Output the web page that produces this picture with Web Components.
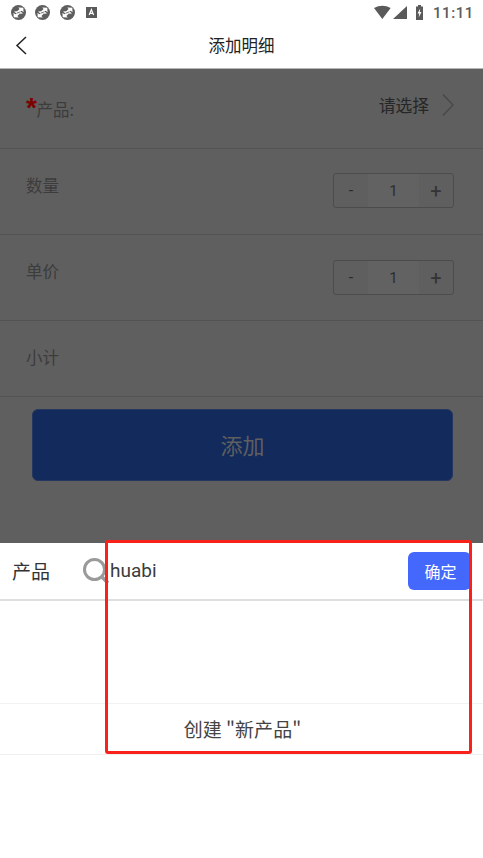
<!DOCTYPE html>
<html lang="zh"><head><meta charset="utf-8"><style>
html,body{margin:0;padding:0;background:#fff}
body{width:483px;height:858px;overflow:hidden;font-family:"Noto Sans CJK SC","Noto Sans",sans-serif;position:relative}
</style></head><body>
<app-page></app-page>
<script>
function def(name,html,setup){customElements.define(name,class extends HTMLElement{constructor(){super();this.attachShadow({mode:'open'}).innerHTML=html;if(setup)setup(this)}})}
const sync='<circle cx="7.500" cy="7.500" r="7.500" fill="#5e5e5e"/><path fill="#fff" d="M3 6.600 6.300 6.200 8.600 3.900 7.200 2.500 12.300 2.700 12.500 7.300 10.800 5.800 7.700 7 5.500 8.500zM12 8.400 8.700 8.800 6.400 11.100 7.800 12.500 2.700 12.300 2.500 7.700 4.200 9.200 7.300 8 9.500 6.500z"/><path fill="#5e5e5e" d="M5.600 7.400 9.400 7.600 9 8.200 6 7.900z" opacity=".8"/>';
def('status-bar',`<style>:host{display:flex;align-items:center;height:24px;padding:0 9px 0 11px;background:#fff;color:#5c5c5c}
.l{display:flex;gap:9.300px;align-items:center}svg{display:block}.sp{flex:1}.t{font:500 15px/24px Roboto,sans-serif;letter-spacing:.6px;margin-left:10px;margin-top:1px}
.r{display:flex;align-items:center}</style>
<div class="l"><svg width="15" height="15" viewBox="0 0 15 15">${sync}</svg><svg width="15" height="15" viewBox="0 0 15 15">${sync}</svg><svg width="15" height="15" viewBox="0 0 15 15">${sync}</svg>
<svg width="11" height="11" viewBox="0 0 11 11" style="margin-left:2px"><rect width="11" height="11" fill="#5a5a5a"/><path fill="none" stroke="#fff" stroke-width="1.200" d="M3.200 8 5.400 2.500 7.600 8M4 6.300H6.800"/></svg></div>
<div class="sp"></div><div class="r">
<svg width="33" height="15" viewBox="0 0 33 15"><path fill="#5a5a5a" d="M0 3Q8.300-1.500 16.700 3L8.300 14zM19 14 33 1V14z"/></svg>
<svg width="7" height="15" viewBox="0 0 7 15" style="margin-left:9px"><path fill="#5a5a5a" d="M2 0H5V1.500H7V15H0V1.500H2z"/><path fill="#fff" d="M4.200 3.500 1.500 8.500H3.200L2.700 12.500 5.500 7H3.800z"/></svg>
<span class="t">11:11</span></div>`);
def('nav-bar',`<style>:host{display:flex;align-items:center;justify-content:center;height:44px;background:#fff;position:relative;border-bottom:1px solid #b5b5b5;color:#222;font-size:16.500px}
svg{position:absolute;left:15px;top:12px}span{margin-top:-2px}</style>
<svg width="13" height="19" viewBox="0 0 13 19"><path fill="none" stroke="#222" stroke-width="1.500" d="M11 1 2 9.500 11 18"/></svg><span><slot></slot></span>`);
def('form-row',`<style>:host{display:flex;box-sizing:border-box;align-items:center;padding:0 29px 0 26px;border-bottom:1px solid #535353;color:#3c3c3c;font-size:16.500px;justify-content:space-between}</style><slot></slot>`);
def('num-stepper',`<style>:host{display:flex;box-sizing:border-box;width:121px;height:35px;border:1px solid #4c4c4c;border-radius:3px;color:#2a2a2a;font:16px/34px Roboto,sans-serif;text-align:center}
div{box-sizing:border-box}.a{width:34px}.m{width:51px;background:#626262;color:#2c2c2c;font-size:15px}.b{width:34px;font-size:20px;color:#333}</style>
<div class="a">-</div><div class="m">1</div><div class="b">+</div>`);
def('add-button',`<style>:host{display:flex;align-items:center;justify-content:center;box-sizing:border-box;height:72px;margin:12px 30px 0 32px;padding-bottom:2px;background:#132a5d;border:1px solid #25375f;border-radius:6px;color:#5f5f5f;font-size:22px}</style><slot></slot>`);
def('dim-form',`<style>:host{display:block;height:474px;background:#5f5f5f;box-sizing:border-box}
.s{color:#7c0000;font:700 28px/1 "Liberation Sans",sans-serif;width:10.500px}
.lb{display:flex;align-items:flex-start;margin-top:-2px}.lb span:last-child{margin-top:3px;color:#3c3c3c}
.rt{display:flex;align-items:center;color:#262626;font-size:16.800px;gap:13px;margin-top:-7px}
.top{align-self:flex-start;margin-top:24px}
.st1{margin-top:-2px}
</style>
<form-row style="height:80px"><div class="lb"><span class="s">*</span><span>产品:</span></div><div class="rt">请选择<svg width="12" height="24" viewBox="0 0 12 24"><path fill="none" stroke="#474747" stroke-width="1.300" d="M1 1.500 11 12 1 22.500"/></svg></div></form-row>
<form-row style="height:86px"><span class="top">数量</span><num-stepper class="st1"></num-stepper></form-row>
<form-row style="height:86px"><span class="top">单价</span><num-stepper></num-stepper></form-row>
<form-row style="height:76px"><span class="top">小计</span></form-row>
<add-button>添加</add-button>`);
def('picker-sheet',`<style>:host{display:block;height:315px;background:#fff;color:#333}
.h{display:flex;align-items:center;height:56px;border-bottom:2px solid #dedede;font-size:19px;padding-left:12px}
.lab{width:70px;margin-top:-2px}.q{font:19px Roboto,sans-serif;margin-left:-1px;margin-top:-2px;flex:1;color:#3c3c3c}
.ok{width:63px;height:38px;background:#4468fb;border-radius:6px;color:#fff;font-size:16px;display:flex;align-items:center;justify-content:center;padding-left:2px;box-sizing:border-box;margin-right:12px}
.e{height:103px;border-bottom:1px solid #f2f2f2;box-sizing:border-box}.c{height:51px;border-bottom:1px solid #f0f0f0;box-sizing:border-box;display:flex;align-items:center;justify-content:center;font-size:19px;color:#444;padding:0 0 2px 2px}</style>
<div class="h"><span class="lab">产品</span><svg width="29" height="29" viewBox="0 0 29 29"><circle cx="12.500" cy="12.500" r="10" fill="none" stroke="#9a9a9a" stroke-width="3"/><path stroke="#9a9a9a" stroke-width="3.500" d="M20 20 26 26"/></svg><span class="q">huabi</span><div class="ok">确定</div></div>
<div class="e"></div><div class="c">创建 "新产品"</div>`);
def('app-page',`<style>:host{display:block;width:483px;height:858px;position:relative;overflow:hidden}
.mark{position:absolute;left:105px;top:540px;width:367px;height:214px;box-sizing:border-box;border:3px solid #f8221a;border-radius:3px}</style>
<status-bar></status-bar><nav-bar>添加明细</nav-bar><dim-form></dim-form><picker-sheet></picker-sheet><div class="mark"></div>`);
</script></body></html>
